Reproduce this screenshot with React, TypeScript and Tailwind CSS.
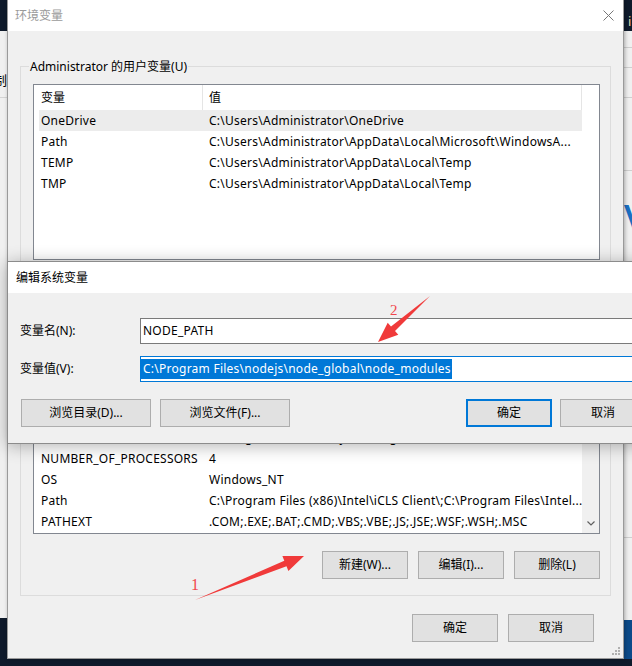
import React from "react";

type Row = [string, string];

const userVars: Row[] = [
  ["OneDrive", "C:\\Users\\Administrator\\OneDrive"],
  ["Path", "C:\\Users\\Administrator\\AppData\\Local\\Microsoft\\WindowsA..."],
  ["TEMP", "C:\\Users\\Administrator\\AppData\\Local\\Temp"],
  ["TMP", "C:\\Users\\Administrator\\AppData\\Local\\Temp"],
];

const sysVars: Row[] = [
  ["ComSpec", "C:\\Windows\\system32\\cmd.exe"],
  ["DriverData", "C:\\Windows\\System32\\Drivers\\DriverData"],
  ["NODE_PATH", "C:\\Program Files\\nodejs\\node_global\\node_modules"],
  ["NUMBER_OF_PROCESSORS", "4"],
  ["OS", "Windows_NT"],
  ["Path", "C:\\Program Files (x86)\\Intel\\iCLS Client\\;C:\\Program Files\\Intel..."],
  ["PATHEXT", ".COM;.EXE;.BAT;.CMD;.VBS;.VBE;.JS;.JSE;.WSF;.WSH;.MSC"],
];

function Btn({ children, primary = false, wide = false }: { children: React.ReactNode; primary?: boolean; wide?: boolean }) {
  return (
    <button
      className={`h-[28px] shrink-0 flex items-center justify-center bg-[#e1e1e1] ${
        wide ? "w-[130px]" : "w-[86px]"
      } ${primary ? "border-2 border-[#0078d7]" : "border border-[#adadad]"}`}
    >
      {children}
    </button>
  );
}

function ListView({ rows, scroll = false, selected }: { rows: Row[]; scroll?: boolean; selected?: number }) {
  return (
    <div className="h-[176px] border border-[#828790] bg-white flex overflow-hidden">
      <div className="w-[548px] flex flex-col">
        <div className="h-[25px] shrink-0 flex">
          <div className="w-[169px] pl-[7px] flex items-center border-r border-[#e5e5e5]">变量</div>
          <div className="w-[379px] pl-[6px] flex items-center border-r border-[#e5e5e5]">值</div>
        </div>
        <div className={`flex-1 min-h-0 flex flex-col pl-[5px] tracking-[0.25px] ${scroll ? "justify-end pb-px" : ""}`}>
          {rows.map(([name, value], i) => (
            <div key={name + i} className={`h-[21px] shrink-0 flex items-center ${i === selected ? "bg-[#ececec]" : ""}`}>
              <div className="w-[163px] pl-[2px] whitespace-nowrap overflow-hidden">{name}</div>
              <div className="flex-1 pl-[7px] whitespace-nowrap overflow-hidden">{value}</div>
            </div>
          ))}
        </div>
      </div>
      {scroll ? (
        <div className="w-[17px] bg-[#f0f0f0] flex flex-col justify-end items-center">
          <div className="h-[17px] flex items-center justify-center mb-[1px]">
            <svg width="8" height="5" viewBox="0 0 8 5">
              <path d="M0.5 0.5 L4 4 L7.5 0.5" fill="none" stroke="#606060" strokeWidth="1.2" />
            </svg>
          </div>
        </div>
      ) : (
        <div className="w-[17px]" />
      )}
    </div>
  );
}

function GroupBox({ label, rows, scroll, selected }: { label: string; rows: Row[]; scroll?: boolean; selected?: number }) {
  return (
    <div className="relative border border-[#dcdcdc] pt-[17px] pl-3 pr-[10px] pb-[16px]">
      <span className="absolute left-[8px] -top-[9px] bg-[#f0f0f0] px-px leading-[17px]">{label}</span>
      <ListView rows={rows} scroll={scroll} selected={selected} />
      <div className="mt-[17px] flex justify-end gap-[10px]">
        <Btn>新建(W)...</Btn>
        <Btn>编辑(I)...</Btn>
        <Btn>删除(L)</Btn>
      </div>
    </div>
  );
}

export default function App() {
  return (
    <div className="relative w-[632px] h-[666px] overflow-hidden bg-[#0f1a2b] text-[12px] text-black font-['Noto_Sans','Noto_Sans_CJK_SC',sans-serif]">
      {/* windows behind */}
      <div className="absolute left-0 top-[31px] w-[8px] h-[587px] bg-[#f0f0f0] overflow-hidden">
        <span className="absolute left-[-6px] top-[40px] text-[13px] leading-[18px]">制</span>
        <div className="absolute left-0 right-0 top-[66px] h-px bg-[#d4d4d4]" />
      </div>
      <div className="absolute left-[624px] top-0 w-[8px] h-[31px] overflow-hidden">
        <span className="absolute left-[4px] top-[14px] text-[13px] leading-[14px] text-[#eadca8]">i</span>
      </div>
      <div className="absolute left-[624px] top-[31px] w-[8px] h-[589px] bg-[#f0f0f0] overflow-hidden">
        <div className="absolute left-0 right-0 top-[16px] h-px bg-[#cfcfcf]" />
        <div className="absolute left-0 right-0 top-[36px] h-px bg-[#cfcfcf]" />
        <div className="absolute left-0 right-0 top-[66px] h-px bg-[#cfcfcf]" />
        <div className="absolute left-0 right-0 top-[139px] h-px bg-[#cfcfcf]" />
        <div className="absolute left-0 right-0 top-[506px] h-px bg-[#cfcfcf]" />
        <span className="absolute left-[0px] top-[160px] text-[48px] leading-[60px] text-[#1a6fc2]">V</span>
      </div>
      <div className="absolute left-[624px] top-[620px] w-[8px] h-[39px] bg-[#0b4a89]" />

      {/* 环境变量 */}
      <div className="absolute left-[7px] top-0 w-[617px] h-[659px] border-x border-b border-[#9a9a9a] bg-[#f0f0f0] flex flex-col shadow-[1px_0_4px_rgba(0,0,0,0.3)]">
        <div className="h-[31px] shrink-0 bg-white flex items-center justify-between pl-[7px] pr-[9px]">
          <span className="text-[#9a9a9a]">环境变量</span>
          <svg width="11" height="11" viewBox="0 0 11 11">
            <path d="M0.5 0.5 L10.5 10.5 M10.5 0.5 L0.5 10.5" stroke="#777777" strokeWidth="1" />
          </svg>
        </div>
        <div className="flex-1 px-3 pt-[35px] flex flex-col">
          <GroupBox label="Administrator 的用户变量(U)" rows={userVars} selected={0} />
          <div className="mt-[18px]">
            <GroupBox label="系统变量(S)" rows={sysVars} scroll />
          </div>
          <div className="mt-[18px] flex justify-end gap-[10px] pr-[17px]">
            <Btn>确定</Btn>
            <Btn>取消</Btn>
          </div>
        </div>
        <svg className="absolute right-[3px] bottom-[3px]" width="8" height="8" viewBox="0 0 8 8" fill="#b0b0b0">
          <rect x="6" y="0" width="2" height="2" />
          <rect x="3" y="3" width="2" height="2" />
          <rect x="6" y="3" width="2" height="2" />
          <rect x="0" y="6" width="2" height="2" />
          <rect x="3" y="6" width="2" height="2" />
          <rect x="6" y="6" width="2" height="2" />
        </svg>
      </div>

      {/* 编辑系统变量 */}
      <div className="absolute left-[7px] top-[261px] w-[720px] border border-[#8c8c8c] bg-[#f0f0f0] flex flex-col shadow-[0_2px_16px_rgba(0,0,0,0.3)]">
        <div className="h-[31px] bg-white flex items-center pl-2">编辑系统变量</div>
        <div className="pl-3 pt-[25px] pb-[16px] flex flex-col">
          <div className="h-[26px] flex items-center">
            <span className="w-[120px]">变量名(N):</span>
            <div className="flex-1 h-full border border-[#7a7a7a] bg-white pl-[2px] flex items-center tracking-[0.25px]">NODE_PATH</div>
          </div>
          <div className="mt-[12px] h-[26px] flex items-center">
            <span className="w-[120px]">变量值(V):</span>
            <div className="flex-1 h-full border border-[#0078d7] bg-white flex items-center">
              <span className="h-[20px] pl-[2px] pr-px leading-[20px] bg-[#0078d7] text-white whitespace-nowrap tracking-[0.25px]">
                C:\Program Files\nodejs\node_global\node_modules
              </span>
            </div>
          </div>
          <div className="mt-[17px] pl-px flex">
            <Btn wide>浏览目录(D)...</Btn>
            <div className="ml-[9px]">
              <Btn wide>浏览文件(F)...</Btn>
            </div>
            <div className="ml-[176px] flex gap-[8px]">
              <Btn primary>确定</Btn>
              <Btn>取消</Btn>
            </div>
          </div>
        </div>
      </div>

      {/* annotations */}
      <svg className="absolute inset-0 pointer-events-none" width="632" height="666" viewBox="0 0 632 666">
        <polygon points="195,600 286.5,566.3 288.4,570.9 304,556 282.4,556.1 284.3,560.7" fill="#f03a3a" />
        <polygon points="430,296 395,331 398.3,334.7 378,342 387.7,322.7 391,326.5" fill="#f03a3a" />
        <text x="191" y="590" fontFamily="'Liberation Serif', serif" fontSize="16" fill="#f0474d">1</text>
        <text x="390" y="315" fontFamily="'Liberation Serif', serif" fontSize="15" fill="#f0474d">2</text>
      </svg>
    </div>
  );
}
